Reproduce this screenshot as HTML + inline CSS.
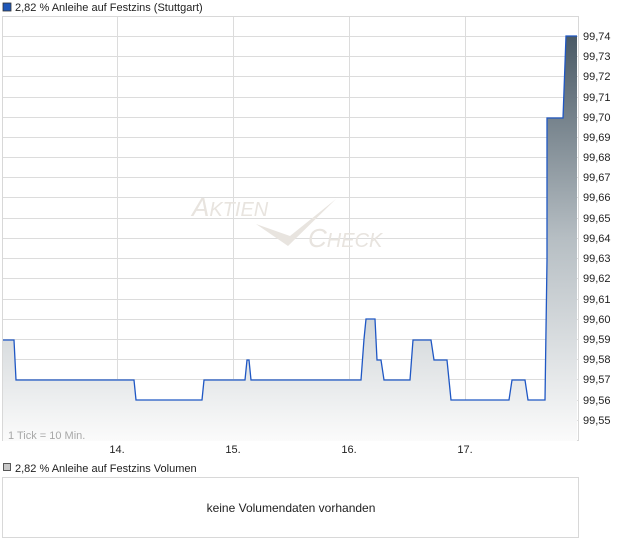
<!DOCTYPE html>
<html><head><meta charset="utf-8"><style>
body{margin:0;background:#fff;width:620px;height:546px;overflow:hidden;font-family:"Liberation Sans",sans-serif;}
</style></head><body>
<svg width="620" height="546" xmlns="http://www.w3.org/2000/svg" font-family="Liberation Sans, sans-serif">
<defs>
<linearGradient id="g" x1="0" y1="0" x2="0" y2="1">
<stop offset="0" stop-color="#4a5a66"/>
<stop offset="0.5" stop-color="#b6bec3"/>
<stop offset="1" stop-color="#fbfbfb"/>
</linearGradient>
<clipPath id="c"><rect x="3" y="17" width="576" height="424"/></clipPath>
</defs>
<rect x="3" y="3" width="8" height="8" fill="#1f57b8" stroke="#333" stroke-width="0.8"/>
<text x="15" y="11" font-size="11" fill="#222">2,82 % Anleihe auf Festzins (Stuttgart)</text>
<rect x="2.5" y="16.5" width="576" height="424" fill="#fff" stroke="#d8d8d8"/>
<g stroke="#dcdcdc" stroke-width="1">
<line x1="117.5" y1="17" x2="117.5" y2="441"/><line x1="233.5" y1="17" x2="233.5" y2="441"/>
<line x1="349.5" y1="17" x2="349.5" y2="441"/><line x1="465.5" y1="17" x2="465.5" y2="441"/>
<line x1="3" y1="36.5" x2="579" y2="36.5"/><line x1="3" y1="56.5" x2="579" y2="56.5"/><line x1="3" y1="76.5" x2="579" y2="76.5"/><line x1="3" y1="97.5" x2="579" y2="97.5"/><line x1="3" y1="117.5" x2="579" y2="117.5"/><line x1="3" y1="137.5" x2="579" y2="137.5"/><line x1="3" y1="157.5" x2="579" y2="157.5"/><line x1="3" y1="177.5" x2="579" y2="177.5"/><line x1="3" y1="197.5" x2="579" y2="197.5"/><line x1="3" y1="218.5" x2="579" y2="218.5"/><line x1="3" y1="238.5" x2="579" y2="238.5"/><line x1="3" y1="258.5" x2="579" y2="258.5"/><line x1="3" y1="278.5" x2="579" y2="278.5"/><line x1="3" y1="299.5" x2="579" y2="299.5"/><line x1="3" y1="319.5" x2="579" y2="319.5"/><line x1="3" y1="339.5" x2="579" y2="339.5"/><line x1="3" y1="359.5" x2="579" y2="359.5"/><line x1="3" y1="379.5" x2="579" y2="379.5"/><line x1="3" y1="400.5" x2="579" y2="400.5"/><line x1="3" y1="420.5" x2="579" y2="420.5"/>
</g>
<g fill="#e8e4df" font-style="italic" font-size="26">
<text x="192" y="216">A<tspan font-size="20">KTIEN</tspan></text>
<text x="308" y="247">C<tspan font-size="20">HECK</tspan></text>
</g>
<path d="M256 224 L288 246 L336 199 L290 236 Z" fill="#e8e4df"/>
<g clip-path="url(#c)">
<path d="M3 340 L14 340 L16 380 L134 380 L136 400 L202 400 L204 380 L245 380 L247 360 L249 360 L251 380 L361 380 L364 339 L366 319 L375 319 L377 360 L381 360 L384 380 L410 380 L413 340 L431 340 L434 360 L447 360 L451 400 L509 400 L512 380 L525 380 L528 400 L545 400 L547 260 L547 118 L563 118 L566 36 L577 36 L577 441 L3 441 Z" fill="url(#g)"/>
<path d="M3 340 L14 340 L16 380 L134 380 L136 400 L202 400 L204 380 L245 380 L247 360 L249 360 L251 380 L361 380 L364 339 L366 319 L375 319 L377 360 L381 360 L384 380 L410 380 L413 340 L431 340 L434 360 L447 360 L451 400 L509 400 L512 380 L525 380 L528 400 L545 400 L547 260 L547 118 L563 118 L566 36 L577 36" fill="none" stroke="#1f57c4" stroke-width="1.3"/>
</g>
<text x="8" y="439" font-size="11" fill="#a8a8a8">1 Tick = 10 Min.</text>
<g font-size="11" fill="#222">
<text x="583" y="40">99,74</text><text x="583" y="60">99,73</text><text x="583" y="80">99,72</text><text x="583" y="101">99,71</text><text x="583" y="121">99,70</text><text x="583" y="141">99,69</text><text x="583" y="161">99,68</text><text x="583" y="181">99,67</text><text x="583" y="201">99,66</text><text x="583" y="222">99,65</text><text x="583" y="242">99,64</text><text x="583" y="262">99,63</text><text x="583" y="282">99,62</text><text x="583" y="303">99,61</text><text x="583" y="323">99,60</text><text x="583" y="343">99,59</text><text x="583" y="363">99,58</text><text x="583" y="383">99,57</text><text x="583" y="404">99,56</text><text x="583" y="424">99,55</text>
<text x="117" y="453" text-anchor="middle">14.</text><text x="233" y="453" text-anchor="middle">15.</text><text x="349" y="453" text-anchor="middle">16.</text><text x="465" y="453" text-anchor="middle">17.</text>
</g>
<rect x="3.5" y="463.5" width="7" height="7" fill="#c8c8c8" stroke="#333" stroke-width="0.8"/>
<text x="15" y="472" font-size="11" fill="#222">2,82 % Anleihe auf Festzins Volumen</text>
<rect x="2.5" y="477.5" width="576" height="60" fill="#fff" stroke="#d8d8d8"/>
<text x="291" y="512" font-size="12" fill="#222" text-anchor="middle">keine Volumendaten vorhanden</text>
</svg>
</body></html>
